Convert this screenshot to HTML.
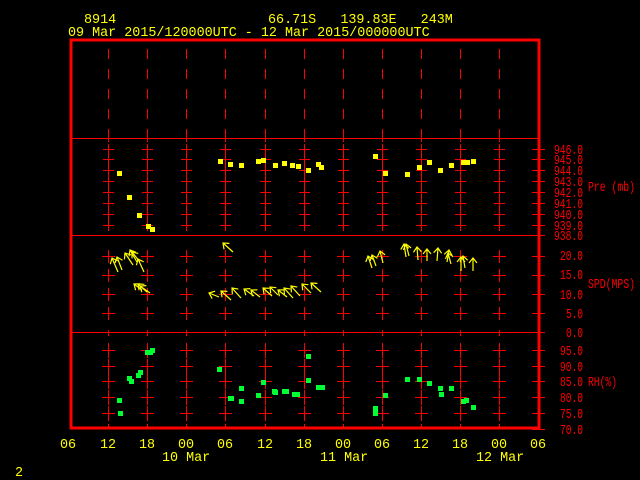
<!DOCTYPE html>
<html><head><meta charset="utf-8"><style>
html,body{margin:0;padding:0;background:#000;width:640px;height:480px;overflow:hidden}
svg{display:block}
text{font-family:"Liberation Mono","DejaVu Sans Mono",monospace;font-size:13.4px}
.y{fill:#ffff00}.r{fill:#ff0000}
.r text{font-size:13.4px}
</style></head><body>
<svg id="s" width="640" height="480" xmlns="http://www.w3.org/2000/svg" shape-rendering="crispEdges">
<rect width="640" height="480" fill="#000"/>
<text x="84" y="23" class="y">8914</text>
<text x="268" y="23" class="y" xml:space="preserve">66.71S   139.83E   243M</text>
<text x="68" y="36" class="y">09 Mar 2015/120000UTC - 12 Mar 2015/000000UTC</text>
<g id="g"></g>
<rect x="71" y="40" width="468" height="388" fill="none" stroke="#ff0000" stroke-width="3"/>
<line x1="70" y1="138.5" x2="540" y2="138.5" stroke="#ff0000"/>
<line x1="70" y1="235.5" x2="545" y2="235.5" stroke="#ff0000"/>
<line x1="70" y1="332.5" x2="545" y2="332.5" stroke="#ff0000"/>
<g class="r" id="rl">
<text x="554" y="154">946.0</text><text x="554" y="164">945.0</text><text x="554" y="175">944.0</text>
<text x="554" y="186">943.0</text><text x="554" y="197">942.0</text><text x="554" y="208">941.0</text>
<text x="554" y="219">940.0</text><text x="554" y="230">939.0</text><text x="554" y="240">938.0</text>
<text x="588" y="191">Pre (mb)</text>
<text x="560" y="260">20.0</text><text x="560" y="279">15.0</text><text x="560" y="299">10.0</text>
<text x="566" y="318">5.0</text><text x="566" y="337">0.0</text>
<text x="588" y="288">SPD(MPS)</text>
<text x="560" y="355">95.0</text><text x="560" y="371">90.0</text><text x="560" y="386">85.0</text>
<text x="560" y="402">80.0</text><text x="560" y="418">75.0</text><text x="560" y="434">70.0</text>
<text x="588" y="386">RH(%)</text>
</g>
<g class="y">
<text x="60" y="448">06</text><text x="100" y="448">12</text><text x="139" y="448">18</text><text x="178" y="448">00</text>
<text x="217" y="448">06</text><text x="257" y="448">12</text><text x="296" y="448">18</text><text x="335" y="448">00</text>
<text x="374" y="448">06</text><text x="413" y="448">12</text><text x="452" y="448">18</text><text x="491" y="448">00</text>
<text x="530" y="448">06</text>
<text x="162" y="461">10 Mar</text><text x="320" y="461">11 Mar</text><text x="476" y="461">12 Mar</text>
<text x="15" y="476">2</text>
</g>
</svg>
<script>
var tl=document.querySelectorAll('#rl text');
for(var i=0;i<tl.length;i++){var t=tl[i];t.setAttribute('textLength',t.textContent.length*6-1);t.setAttribute('lengthAdjust','spacingAndGlyphs');}
var g=document.getElementById('g'),h='';
function L(a,b,c,d,col,w){h+='<line x1="'+a+'" y1="'+b+'" x2="'+c+'" y2="'+d+'" stroke="'+col+'" stroke-width="'+(w||1)+'"/>';}
var xs=[108,147,186,225,265,304,343,382,421,460,499];
xs.forEach(function(x){
  var xx=x+0.5;
  [49,69,89,109,129].forEach(function(y){L(xx,y,xx,y+10,'#f00');});
  [149,159,170,181,192,203,214,225].forEach(function(y){L(xx,y-5,xx,y+6,'#f00');L(x-5,y+0.5,x+6,y+0.5,'#f00');});
  [256,275,294,313].forEach(function(y){L(xx,y-6,xx,y+7,'#f00');L(x-6,y+0.5,x+7,y+0.5,'#f00');});
  [350,366,381,397,413].forEach(function(y){L(xx,y-7,xx,y+8,'#f00');L(x-6,y+0.5,x+7,y+0.5,'#f00');});
  L(xx,138,xx,142,'#f00');L(xx,330,xx,336,'#f00');L(xx,424,xx,429,'#f00');
});
[149,159,170,181,192,203,214,225,235,256,275,294,313,332,350,366,381,397,413,429].forEach(function(y){L(532,y+0.5,545,y+0.5,'#f00');});
var P=[[119,173],[129,197],[139,215],[148,226],[152,229],[220,161],[230,164],[241,165],[258,161],[263,160],[275,165],[284,163],[292,165],[298,166],[308,170],[318,164],[321,167],[375,156],[385,173],[407,174],[419,167],[429,162],[440,170],[451,165],[463,162],[467,162],[473,161]];
P.forEach(function(p){h+='<rect x="'+(p[0]-2)+'" y="'+(p[1]-2)+'" width="5" height="5" fill="#ffff00"/>';});
var R=[[119,400],[120,413],[129,378],[131,381],[138,375],[140,372],[147,352],[150,352],[152,350],[219,369],[230,398],[231,398],[241,388],[241,401],[258,395],[263,382],[274,391],[275,392],[284,391],[286,391],[294,394],[297,394],[308,380],[308,356],[318,387],[322,387],[375,408],[375,413],[385,395],[407,379],[419,379],[429,383],[440,388],[441,394],[451,388],[463,401],[466,400],[473,407]];
R.forEach(function(p){h+='<rect x="'+(p[0]-2)+'" y="'+(p[1]-2)+'" width="5" height="5" fill="#00ff33"/>';});
var W=[[118,272,-6,-14],[122,270,-5,-13],[133,265,-8,-12],[137,262,-7,-12],[144,272,-6,-13],[140,262,-8,-10],[147,292,-9,-8],[150,293,-10,-7],[142,290,-8,-6],
[233,252,-10,-9],
[219,297,-10,-4],[231,300,-10,-9],[241,298,-9,-10],[254,296,-10,-7],[260,297,-9,-7],[272,296,-9,-8],[278,295,-8,-8],[287,297,-9,-7],[293,298,-9,-10],[300,296,-9,-10],[311,293,-9,-9],[321,292,-10,-9],
[372,268,-4,-12],[376,266,-4,-11],[383,263,-3,-12],[406,257,-2,-13],[409,256,-3,-12],[418,260,-1,-13],[427,261,0,-12],[437,261,1,-13],[447,262,2,-12],[451,264,-3,-11],[461,271,0,-14],[465,268,-2,-12],[473,271,0,-13]];
W.forEach(function(w){
  var x=w[0],y=w[1],tx=x+w[2],ty=y+w[3];
  var dx=w[2],dy=w[3],l=Math.sqrt(dx*dx+dy*dy),ux=dx/l,uy=dy/l;
  var px=-uy,py=ux;
  h+='<g stroke="#ffff00" stroke-width="1.2" fill="none" shape-rendering="auto">';
  h+='<line x1="'+x+'" y1="'+y+'" x2="'+tx+'" y2="'+ty+'"/>';
  h+='<polyline points="'+(tx-ux*5+px*4)+','+(ty-uy*5+py*4)+' '+tx+','+ty+' '+(tx-ux*5-px*4)+','+(ty-uy*5-py*4)+'"/>';
  h+='</g>';
});
g.innerHTML=h;
</script>
</body></html>
